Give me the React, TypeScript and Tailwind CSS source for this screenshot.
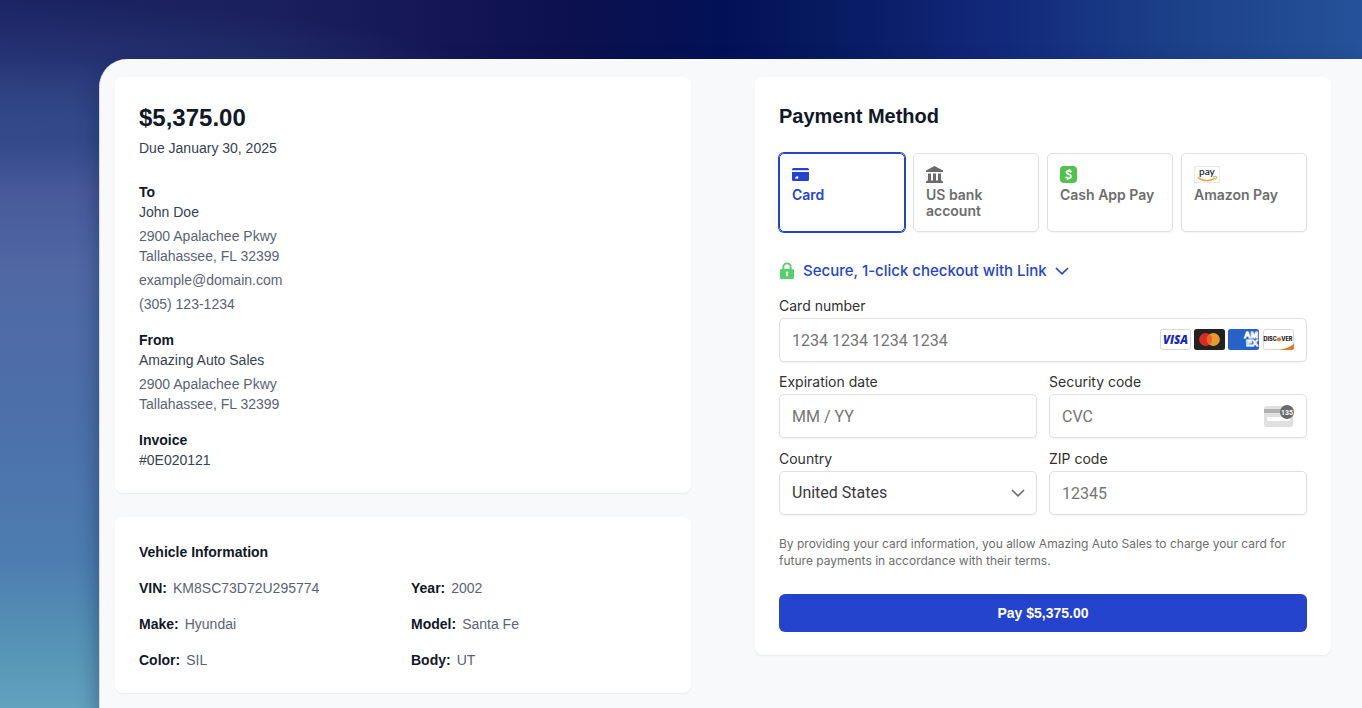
import type { InputHTMLAttributes, ReactNode } from 'react';

const address = ['2900 Apalachee Pkwy', 'Tallahassee, FL 32399'];

const vehicle = [
  { label: 'VIN', value: 'KM8SC73D72U295774' },
  { label: 'Year', value: '2002' },
  { label: 'Make', value: 'Hyundai' },
  { label: 'Model', value: 'Santa Fe' },
  { label: 'Color', value: 'SIL' },
  { label: 'Body', value: 'UT' },
];

// ---------- Icons ----------

function CardIcon() {
  return (
    <svg width="17" height="17" viewBox="0 0 17 17" aria-hidden="true">
      <path d="M0 3.6Q0 2 1.5 2h14Q17 2 17 3.6V4.3H0Z" fill="#2544cd" />
      <path d="M0 6h17v7.4q0 1.6-1.5 1.6h-14Q0 15 0 13.4Z" fill="#2544cd" />
      <circle cx="5.2" cy="11.5" r="1.2" fill="#fff" />
      <circle cx="3.8" cy="12" r=".8" fill="#fff" />
    </svg>
  );
}

function BankIcon() {
  return (
    <svg width="17" height="17" viewBox="0 0 17 17" fill="#6b6b6b" aria-hidden="true">
      <path d="M8.5 0 17 4.500V6H0V4.500ZM2 7.400h3v7H2ZM7 7.400h3v7H7ZM12 7.400h3v7h-3ZM1 14.400h15l1 1.300V17H0v-1.300Z" />
    </svg>
  );
}

function CashAppIcon() {
  return (
    <svg width="17" height="17" viewBox="0 0 17 17" aria-hidden="true">
      <rect width="17" height="17" rx="4" fill="#4fc34b" />
      <path
        d="M11.4 6.2C10.5 5.3 9.6 5 8.7 5c-1.3 0-2.2.6-2.2 1.5 0 2.2 4.5 1.2 4.5 3.8 0 1.2-1.1 1.9-2.5 1.9-1.1 0-2.2-.5-2.9-1.3M9.7 3l-.4 2M8 12.2 7.6 14"
        fill="none"
        stroke="#fff"
        strokeWidth="1.8"
      />
    </svg>
  );
}

function AmazonPayIcon() {
  return (
    <svg width="26" height="17" viewBox="0 0 26 17" aria-hidden="true">
      <rect x=".5" y=".5" width="25" height="16" fill="#fff" stroke="#e9e9e9" />
      <text x="5" y="9" fontSize="10" fontFamily="Lato, sans-serif" fill="#1d2430">
        pay
      </text>
      <path d="M4 11.5c5 4.2 12.5 4 17 .6" fill="none" stroke="#f29a2e" strokeWidth="1.2" />
      <path d="M19 11c2-.9 3.700-.9 3.600 0 0 .9-.5 1.900-1.200 2.700" fill="none" stroke="#f29a2e" />
    </svg>
  );
}

function LockIcon() {
  return (
    <svg width="16" height="18" viewBox="0 0 16 18" aria-hidden="true">
      <path d="M4.4 8V5a3.6 3.6 0 0 1 7.200 0v3" fill="none" stroke="#55cf6b" strokeWidth="1.9" />
      <rect x="1" y="7" width="14" height="10" rx="1.6" fill="#55cf6b" />
      <circle cx="8" cy="10.6" r="1.2" fill="#fff" />
      <path d="M7.200 11h1.600v3.200H7.200Z" fill="#fff" />
    </svg>
  );
}

function Chevron({ className }: { className: string }) {
  return (
    <svg width="14" height="8" viewBox="0 0 14 8" className={className} aria-hidden="true">
      <path d="m1 1 6 5.800L13 1" fill="none" stroke="currentColor" strokeWidth="1.6" />
    </svg>
  );
}

function CardBrands() {
  return (
    <div className="pointer-events-none absolute top-[11px] right-[13px] flex gap-[3px]">
      <svg width="31" height="21" viewBox="0 0 31 21" role="img" aria-label="Visa">
        <rect x=".5" y=".5" width="30" height="20" rx="2" fill="#fff" stroke="#d9d9d9" />
        <text
          x="15.5"
          y="14.7"
          textAnchor="middle"
          fontSize="11.5"
          fontWeight="800"
          fontStyle="italic"
          fontFamily="Open Sans, sans-serif"
          fill="#1a27bd"
        >
          VISA
        </text>
      </svg>
      <svg width="31" height="21" viewBox="0 0 31 21" role="img" aria-label="Mastercard">
        <rect width="31" height="21" rx="2.5" fill="#222" />
        <circle cx="11.6" cy="10.5" r="6.5" fill="#d92d20" />
        <circle cx="19.4" cy="10.5" r="6.5" fill="#e99a2f" />
        <path d="M15.5 5.3a6.5 6.5 0 0 1 0 10.4 6.5 6.5 0 0 1 0-10.4Z" fill="#e9602a" />
      </svg>
      <svg width="31" height="21" viewBox="0 0 31 21" role="img" aria-label="American Express">
        <rect width="31" height="21" rx="2.5" fill="#2862c9" />
        <g fontSize="9" fontWeight="700" fontFamily="Liberation Sans, sans-serif" fill="#2862c9" stroke="#fff" strokeWidth=".9">
          <text x="16" y="9">AM</text>
          <text x="18" y="17">EX</text>
        </g>
      </svg>
      <svg width="32" height="21" viewBox="0 0 32 21" role="img" aria-label="Discover">
        <rect x="1.5" y=".5" width="30" height="20" rx="2" fill="#fff" stroke="#d9d9d9" />
        <path d="M17 21c6-1 11-3 15-6v4q0 2-2 2Z" fill="#e5772b" />
        <g fontSize="5.5" fontWeight="800" fontFamily="Inter, sans-serif" fill="#1d1d1d">
          <text x="1.5" y="12.3">DISC</text>
          <text x="19.2" y="12.3">VER</text>
        </g>
        <circle cx="17" cy="10.3" r="2.1" fill="#e5772b" />
      </svg>
    </div>
  );
}

function CvcIcon() {
  return (
    <svg
      width="30"
      height="22"
      viewBox="0 0 30 22"
      className="pointer-events-none absolute top-[11px] right-[13px]"
      aria-hidden="true"
    >
      <rect y="1" width="29" height="21" rx="2.5" fill="#e0e0e0" />
      <path d="M0 4h29v4H0Z" fill="#b1b1b1" />
      <rect x="3" y="12" width="23" height="4" rx=".5" fill="#fff" />
      <circle cx="23" cy="7" r="7" fill="#6a6a6a" />
      <text x="23" y="9.5" textAnchor="middle" fontSize="7" fontWeight="700" fontFamily="Roboto, sans-serif" fill="#fff">
        135
      </text>
    </svg>
  );
}

// ---------- Building blocks ----------

function Panel({ children }: { children: ReactNode }) {
  return (
    <section className="rounded-lg bg-white px-6 pt-[25px] pb-[23px] shadow-[0_1px_2px_rgba(0,0,0,0.06)]">
      {children}
    </section>
  );
}

function MethodButton({ icon, label, active = false }: { icon: ReactNode; label: string; active?: boolean }) {
  return (
    <button
      type="button"
      aria-pressed={active}
      className={`flex h-[79px] flex-col items-start rounded-[5px] px-3 pt-3 text-left font-[Inter,sans-serif] text-sm leading-4 font-semibold ${
        active
          ? 'border border-[#2544cd] text-[#2544cd] ring-1 ring-[#2544cd]'
          : 'border border-[#e0e0e0] text-[#6d6d6d] shadow-[0_1px_2px_rgba(0,0,0,0.05)]'
      }`}
    >
      {icon}
      <span className="mt-1">{label}</span>
    </button>
  );
}

const control =
  'block h-11 w-full rounded-[5px] border border-[#e0e0e0] bg-white px-3 font-[Roboto,sans-serif] text-base text-[#3a3a3a] shadow-[0_1px_2px_rgba(0,0,0,0.05)] outline-none placeholder:text-[#757575]';

function Field({ id, label, children }: { id: string; label: string; children: ReactNode }) {
  return (
    <div>
      <label htmlFor={id} className="mb-1 block font-[Inter,sans-serif] text-sm leading-4 text-[#303030]">
        {label}
      </label>
      <div className="relative">{children}</div>
    </div>
  );
}

function TextInput(props: InputHTMLAttributes<HTMLInputElement>) {
  return <input type="text" className={control} {...props} />;
}

// ---------- Page ----------

function InvoiceSummary() {
  return (
    <Panel>
      <h1 className="text-2xl font-bold text-[#111827]">$5,375.00</h1>
      <p className="mt-1 text-[#374151]">Due January 30, 2025</p>

      <h2 className="mt-6 font-bold text-[#111827]">To</h2>
      <p className="text-[#374151]">John Doe</p>
      <address className="mt-1 text-[#5b6373] not-italic">
        {address.map((line) => (
          <p key={line}>{line}</p>
        ))}
        <p className="mt-1">example@domain.com</p>
        <p className="mt-1">(305) 123-1234</p>
      </address>

      <h2 className="mt-4 font-bold text-[#111827]">From</h2>
      <p className="text-[#374151]">Amazing Auto Sales</p>
      <address className="mt-1 text-[#5b6373] not-italic">
        {address.map((line) => (
          <p key={line}>{line}</p>
        ))}
      </address>

      <h2 className="mt-4 font-bold text-[#111827]">Invoice</h2>
      <p className="text-[#374151]">#0E020121</p>
    </Panel>
  );
}

function VehicleInfo() {
  return (
    <Panel>
      <h2 className="font-bold text-[#111827]">Vehicle Information</h2>
      <dl className="mt-4 grid grid-cols-2 gap-4">
        {vehicle.map(({ label, value }) => (
          <div key={label} className="flex gap-1.5">
            <dt className="font-bold text-[#111827]">{label}:</dt>
            <dd className="text-[#5b6373]">{value}</dd>
          </div>
        ))}
      </dl>
    </Panel>
  );
}

function PaymentForm() {
  return (
    <Panel>
      <form onSubmit={(e) => e.preventDefault()}>
        <h2 className="text-xl font-bold text-[#111827]">Payment Method</h2>

        <div className="mt-[23px] grid grid-cols-4 gap-2">
          <MethodButton icon={<CardIcon />} label="Card" active />
          <MethodButton icon={<BankIcon />} label="US bank account" />
          <MethodButton icon={<CashAppIcon />} label="Cash App Pay" />
          <MethodButton icon={<AmazonPayIcon />} label="Amazon Pay" />
        </div>

        <button
          type="button"
          className="mt-7 flex items-center gap-2 font-[Inter,sans-serif] text-[15px] leading-[22px] font-medium text-[#2544cd]"
        >
          <LockIcon />
          Secure, 1-click checkout with Link
          <Chevron className="text-[#2544cd]" />
        </button>

        <div className="mt-4">
          <Field id="number" label="Card number">
            <TextInput id="number" placeholder="1234 1234 1234 1234" />
            <CardBrands />
          </Field>
        </div>
        <div className="mt-3 grid grid-cols-2 gap-x-3 gap-y-[13px]">
          <Field id="expiry" label="Expiration date">
            <TextInput id="expiry" placeholder="MM / YY" />
          </Field>
          <Field id="cvc" label="Security code">
            <TextInput id="cvc" placeholder="CVC" />
            <CvcIcon />
          </Field>
          <Field id="country" label="Country">
            <select id="country" className={`${control} appearance-none`}>
              <option>United States</option>
            </select>
            <Chevron className="pointer-events-none absolute top-[18px] right-3 text-[#6b6b6b]" />
          </Field>
          <Field id="zip" label="ZIP code">
            <TextInput id="zip" placeholder="12345" />
          </Field>
        </div>

        <p className="mt-5 font-[Inter,sans-serif] text-xs leading-[17px] text-[#6d6d6d]">
          By providing your card information, you allow Amazing Auto Sales to charge your card for future payments in
          accordance with their terms.
        </p>

        <button
          type="submit"
          className="mt-[25px] h-[38px] w-full rounded-md bg-[#2544cd] text-sm font-bold text-white"
        >
          Pay $5,375.00
        </button>
      </form>
    </Panel>
  );
}

// Dark band along the top, with a lighter blue wash down the left edge
const backdrop =
  'bg-[linear-gradient(180deg,transparent_59px,#33498a_140px,#47599a_190px,#5068a4_270px,#4c70aa_420px,#4d7db0_560px,#5592b5_640px,#62a2be_708px),radial-gradient(ellipse_600px_140px_at_0px_140px,#33498a,transparent),linear-gradient(90deg,#1c2464_0%,#1a205c_20%,#141555_33%,#0b104f_43%,#021156_53%,#06195f_60%,#12287a_73%,#1b4088_86%,#25529a_100%)] bg-[size:127px_100%,100%_100%,100%_100%] bg-no-repeat';

export default function App() {
  return (
    <div
      className={`min-h-screen pt-[59px] pl-[99px] font-['Liberation_Sans',Arial,sans-serif] text-sm ${backdrop}`}
    >
      <main className="grid min-h-[calc(100vh-59px)] grid-cols-2 items-start gap-16 rounded-tl-[28px] border-l border-[#d3d8ea] bg-[#f8f9fb] pt-[18px] pr-[31px] pb-[15px] pl-[15px] shadow-[-2px_8px_20px_rgba(10,30,70,0.4)]">
        <div className="grid gap-6">
          <InvoiceSummary />
          <VehicleInfo />
        </div>
        <PaymentForm />
      </main>
    </div>
  );
}
